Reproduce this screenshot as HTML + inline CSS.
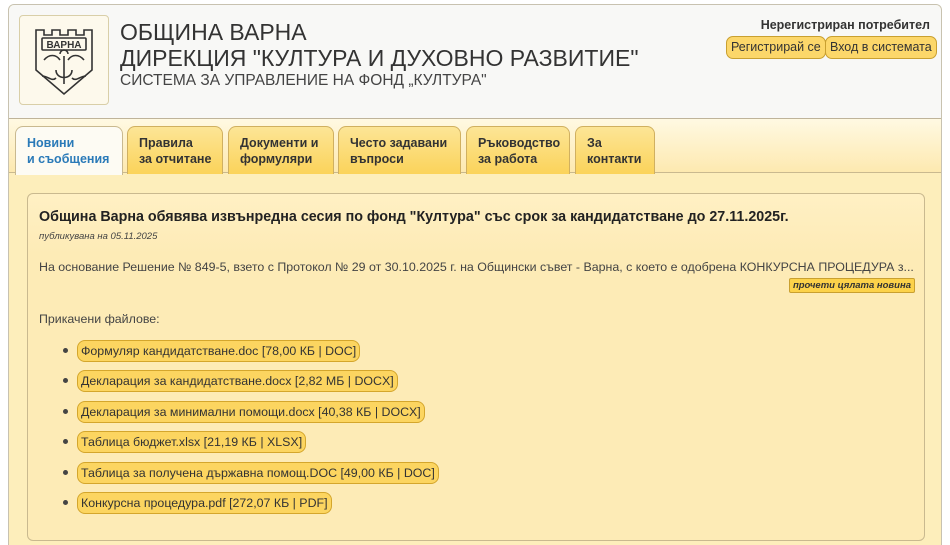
<!DOCTYPE html>
<html style="width:950px;height:545px;overflow:hidden"><head><meta charset="utf-8"><style>
*{margin:0;padding:0;box-sizing:border-box}
body{width:950px;height:545px;overflow:hidden;background:#fff;font-family:"Liberation Sans","DejaVu Sans",sans-serif;color:#333;position:relative}
.outer{position:absolute;left:8px;top:4px;width:934px;height:560px;border:1px solid #c8c2b0;border-radius:6px;background:#fdeebb;overflow:hidden}
.hdr{position:absolute;left:0;top:0;width:100%;height:114px;background:#f8f8f6;border-bottom:1px solid #bfb49a}
.logo{position:absolute;left:10px;top:10px;width:90px;height:90px;border:1px solid #d9cfa8;border-radius:4px;background:#fdf9ec}
.t1{position:absolute;left:111px;top:14px;font-size:23px;color:#333;line-height:26px}
.t3{position:absolute;left:111px;top:67px;font-size:15.5px;color:#444}
.user{position:absolute;right:11px;top:13px;font-weight:bold;font-size:12.5px;color:#333}
.btn{position:absolute;top:31px;height:23px;border:1px solid #c9a030;border-radius:7px;background:#fcd76a;font-size:12.5px;line-height:21px;padding:0 4px;color:#333}
.tabs{position:absolute;left:0;top:114px;width:100%;height:54px;background:linear-gradient(#fff9e2,#fde9b0);border-bottom:1px solid #c9b98f}
.tab{position:absolute;top:7px;height:48px;border:1px solid #d0b060;border-bottom:none;border-radius:8px 8px 0 0;background:linear-gradient(#fce596,#fbd35a);font-weight:bold;font-size:12.5px;line-height:16px;padding:8px 0 0 11px;color:#333}
.tab.act{background:#fdfbf3;color:#2a7ab8;border-color:#c9b98f;height:49px}
.box{position:absolute;left:18px;top:188px;width:898px;height:348px;border:1px solid #c9b98f;border-radius:6px;background:linear-gradient(#fff0c4,#fdebb6 60px)}
h1{position:absolute;left:11px;top:15px;font-size:14.3px;font-weight:bold;color:#222;white-space:nowrap}
.date{position:absolute;left:11px;top:37px;font-size:9.5px;font-style:italic;color:#444}
.txt{position:absolute;left:11px;top:66px;font-size:12.4px;color:#444;white-space:nowrap}
.more{position:absolute;right:9px;top:84px;font-size:9.5px;font-weight:bold;font-style:italic;background:#fcd24a;border:1px solid #c9a030;border-radius:2px;padding:1px 3px;color:#333}
.att{position:absolute;left:11px;top:118px;font-size:12.4px;color:#444}
.f{position:absolute;left:49px;height:22px;border:1px solid #d4a62c;border-radius:8px;background:#fcd560;font-size:12.4px;line-height:20px;padding:0 3px;color:#333;white-space:nowrap}
.b{position:absolute;left:35px;width:5px;height:5px;border-radius:50%;background:#444}
</style></head><body>
<div class="outer">
 <div class="hdr">
  <div class="logo">
   <svg width="88" height="88" viewBox="0 0 88 88"><g fill="none" stroke="#333" stroke-width="1.6">
   <path d="M16 14h8v5h8v-5h8v5h8v-5h8v5h8v-5h8v40l-28 24-28-24z"/>
   <rect x="22" y="22" width="44" height="12" rx="1"/>
   <path d="M24 44c5-6 12-6 16 0M64 44c-5-6-12-6-16 0M44 40v28M36 54c0 10 16 10 16 0M22 60c6 0 10 6 14 2M66 60c-6 0-10 6-14 2M40 38a4 4 0 0 1 8 0"/></g>
   <text x="44" y="32" font-size="10" font-weight="bold" text-anchor="middle" fill="#333" font-family="Liberation Sans">ВАРНА</text></svg>
  </div>
  <div class="t1">ОБЩИНА ВАРНА<br>ДИРЕКЦИЯ "КУЛТУРА И ДУХОВНО РАЗВИТИЕ"</div>
  <div class="t3">СИСТЕМА ЗА УПРАВЛЕНИЕ НА ФОНД „КУЛТУРА"</div>
  <div class="user">Нерегистриран потребител</div>
  <div class="btn" style="left:717px">Регистрирай се</div>
  <div class="btn" style="left:816px">Вход в системата</div>
 </div>
 <div class="tabs">
  <div class="tab act" style="left:6px;width:108px">Новини<br>и съобщения</div>
  <div class="tab" style="left:118px;width:96px">Правила<br>за отчитане</div>
  <div class="tab" style="left:219px;width:106px">Документи и<br>формуляри</div>
  <div class="tab" style="left:329px;width:123px">Често задавани<br>въпроси</div>
  <div class="tab" style="left:457px;width:104px">Ръководство<br>за работа</div>
  <div class="tab" style="left:566px;width:80px">За<br>контакти</div>
 </div>
 <div class="box">
  <h1>Община Варна обявява извънредна сесия по фонд "Култура" със срок за кандидатстване до 27.11.2025г.</h1>
  <div class="date">публикувана на 05.11.2025</div>
  <div class="txt">На основание Решение № 849-5, взето с Протокол № 29 от 30.10.2025 г. на Общински съвет - Варна, с което е одобрена КОНКУРСНА ПРОЦЕДУРА з...</div>
  <div class="more">прочети цялата новина</div>
  <div class="att">Прикачени файлове:</div>
  <div class="b" style="top:154px"></div><div class="f" style="top:146px">Формуляр кандидатстване.doc [78,00 КБ | DOC]</div>
  <div class="b" style="top:184px"></div><div class="f" style="top:176px">Декларация за кандидатстване.docx [2,82 МБ | DOCX]</div>
  <div class="b" style="top:215px"></div><div class="f" style="top:207px">Декларация за минимални помощи.docx [40,38 КБ | DOCX]</div>
  <div class="b" style="top:245px"></div><div class="f" style="top:237px">Таблица бюджет.xlsx [21,19 КБ | XLSX]</div>
  <div class="b" style="top:276px"></div><div class="f" style="top:268px">Таблица за получена държавна помощ.DOC [49,00 КБ | DOC]</div>
  <div class="b" style="top:306px"></div><div class="f" style="top:298px">Конкурсна процедура.pdf [272,07 КБ | PDF]</div>
 </div>
</div>
</body></html>
